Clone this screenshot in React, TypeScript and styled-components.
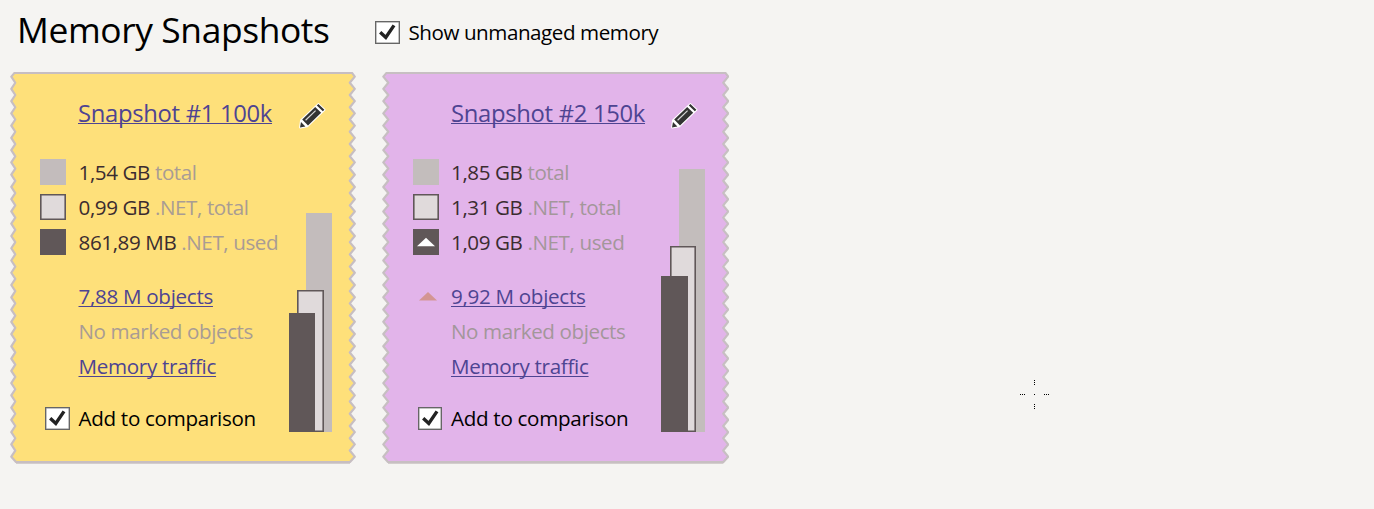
import React from "react";
import styled, { createGlobalStyle } from "styled-components";

const GlobalStyle = createGlobalStyle`
  body {
    margin: 0;
    background: #f5f4f2;
    font-family: "Open Sans", "Noto Sans", sans-serif;
    color: #000;
  }
`;

const Page = styled.main`
  position: relative;
  box-sizing: border-box;
  height: 509px;
  overflow: hidden;
`;

const Header = styled.header`
  display: flex;
  align-items: flex-start;
  height: 72px;
  padding-left: 17px;
  box-sizing: border-box;
`;

const Heading = styled.h1`
  width: 358px;
  margin: 4px 0 0;
  font-size: 35.4px;
  font-weight: 400;
  letter-spacing: -0.4px;
  line-height: 50px;
  white-space: nowrap;
`;

const CheckRow = styled.label<{ $gap: number; $tracking?: number }>`
  display: flex;
  align-items: flex-start;
  gap: ${(p) => p.$gap}px;
  font-size: 20.6px;
  letter-spacing: ${(p) => p.$tracking ?? -0.3}px;
  line-height: 35px;
  white-space: nowrap;
`;

const HeaderCheck = styled.div`
  margin-top: 15px;
`;

const CheckBox = styled.span<{ $width: number }>`
  box-sizing: border-box;
  flex: none;
  width: ${(p) => p.$width}px;
  height: 23px;
  margin-top: 6px;
  border: 1px solid #666;
  box-shadow: inset 0 0 0 0.5px #8a8a8a;
  background: #fff;
  svg {
    display: block;
  }
`;

const Cards = styled.section`
  display: flex;
  gap: 26px;
  padding-left: 10px;
`;

const Card = styled.article<{ $width: number; $inset: number }>`
  position: relative;
  display: flex;
  box-sizing: border-box;
  width: ${(p) => p.$width}px;
  height: 392px;
  padding: 26px 0 0 ${(p) => p.$inset}px;
`;

const Paper = styled.svg`
  position: absolute;
  inset: 0;
`;

const Info = styled.div<{ $width: number }>`
  position: relative;
  flex: none;
  width: ${(p) => p.$width}px;
`;

const TitleRow = styled.div`
  display: flex;
  height: 57px;
  padding-left: 38px;
  white-space: nowrap;
`;

const Link = styled.a<{ $title?: boolean }>`
  color: #4e4492;
  font-size: ${(p) => (p.$title ? "23.8px" : "20.6px")};
  letter-spacing: -0.3px;
  line-height: ${(p) => (p.$title ? "30px" : "inherit")};
  text-decoration: underline;
  text-decoration-thickness: 1.4px;
  text-underline-offset: ${(p) => (p.$title ? "1px" : "2px")};
  text-decoration-skip-ink: none;
  font-variant-ligatures: none;
`;

const Row = styled.div<{ $textColumn: number }>`
  display: grid;
  grid-template-columns: ${(p) => p.$textColumn}px auto;
  align-items: start;
  height: 35px;
  font-size: 20.6px;
  letter-spacing: -0.4px;
  line-height: 35px;
  white-space: nowrap;
  color: #3b2c30;
`;

const Group = styled.div`
  margin-bottom: 19px;
`;

const Muted = styled.span<{ $color: string }>`
  color: ${(p) => p.$color};
`;

const swatchFill = { net: "#e0dadb", used: "#605758" };

const Swatch = styled.span<{ $fill: string; $outlined?: boolean }>`
  box-sizing: border-box;
  display: block;
  width: 26px;
  height: 26px;
  margin-top: 4px;
  background: ${(p) => p.$fill};
  border: ${(p) => (p.$outlined ? "1px solid #605758" : "none")};
  box-shadow: ${(p) => (p.$outlined ? "inset 0 0 0 0.6px #605758" : "none")};
`;

const Trend = styled.span`
  display: block;
  padding: 13px 0 0 6px;
  svg {
    display: block;
  }
`;

const CompareRow = styled.div`
  margin-top: -2px;
  padding-left: 5px;
`;

const Side = styled.div`
  position: relative;
  display: flex;
  flex-direction: column;
  justify-content: space-between;
  height: 334px;
`;

const EditButton = styled.button`
  align-self: flex-start;
  width: 28px;
  height: 28px;
  margin: 4px 0 0 10px;
  padding: 0;
  border: 0;
  background: none;
  svg {
    display: block;
  }
`;

const Bars = styled.div`
  display: flex;
  flex-direction: row-reverse;
  justify-content: flex-end;
  align-items: flex-end;
`;

const Bar = styled.div<{ $fill: string; $outlined?: boolean; $overlap?: number; $width?: number }>`
  position: relative;
  box-sizing: border-box;
  flex: none;
  width: ${(p) => p.$width ?? 26}px;
  margin-right: -${(p) => p.$overlap ?? 0}px;
  background: ${(p) => p.$fill};
  border: ${(p) => (p.$outlined ? "1px solid #605758" : "none")};
  box-shadow: ${(p) => (p.$outlined ? "inset 0 0 0 0.6px #605758" : "none")};
`;

const Crosshair = styled.svg`
  position: absolute;
  left: 1020px;
  top: 380px;
`;

function Check({ width = 25 }: { width?: number }) {
  return (
    <CheckBox $width={width}>
      <svg width="22" height="21" viewBox="0 0 22 21">
        <path d="M4.2 10.2 L9.8 15.4 L18 3.4" fill="none" stroke="#222" strokeWidth="3.4" />
      </svg>
    </CheckBox>
  );
}

function Triangle({ color }: { color: string }) {
  return (
    <svg width="18" height="9" viewBox="0 0 18 9">
      <path d="M0 8.6 L9 0 L18 8.6 Z" fill={color} />
    </svg>
  );
}

function Pencil() {
  return (
    <svg width="28" height="28" viewBox="0 0 28 28">
      <path d="M1.2 25.4 L2.2 18.2 L19.4 2.2 L25.4 7.8 L8.2 24.2 Z" fill="#fff" stroke="#fff" strokeWidth="2.2" strokeLinejoin="round" />
      <path
        d="M1 25.6 L2 20 L6.4 24.4 Z M3.2 17.5 L16.2 5 L22.2 10.7 L9 23.4 Z M17.8 3.6 L19.4 2.1 L25.4 7.8 L23.8 9.3 Z"
        fill="#333"
      />
      <path d="M6.6 18.2 L16.6 8.6" stroke="#d8d8d8" strokeWidth="1.2" />
    </svg>
  );
}

const TEETH = 31;
const PITCH = 12.26;

function tornEdge(width: number, depthLeft: number) {
  const right = width - 1.2;
  const left = 1.3;
  const down: string[] = [];
  const up: string[] = [];
  for (let i = 0; i <= TEETH; i++) {
    const y = 4.6 + i * PITCH;
    down.push(`L${right} ${y}`);
    up.unshift(`L${left} ${y}`);
    if (i < TEETH) {
      down.push(`L${right - 5} ${y + PITCH / 2}`);
      up.unshift(`L${left + depthLeft} ${y + PITCH / 2}`);
    }
  }
  return `M4.5 0.9 L${width - 4} 0.9 ${down.join(" ")} L${width - 6} 390 L6 390 ${up.join(" ")} Z`;
}

type Snapshot = {
  name: string;
  width: number;
  inset: number;
  infoWidth: number;
  textColumn: number;
  depth: number;
  paper: string;
  line: string;
  gray: string;
  muted: string;
  values: [string, string, string];
  objects: string;
  heights: [number, number, number];
  usedWidth: number;
  netWidth: number;
  checkWidth: number;
  grew: boolean;
};

const snapshots: Snapshot[] = [
  {
    name: "Snapshot #1 100k", width: 346, inset: 30, infoWidth: 249, textColumn: 38.5, depth: 4,
    paper: "#fee07a", line: "#c7bec2", gray: "#c3bcbc", muted: "#a99c94",
    values: ["1,54 GB", "0,99 GB", "861,89 MB"], objects: "7,88 M objects",
    heights: [219, 142, 119], usedWidth: 26, netWidth: 27, checkWidth: 25, grew: false,
  },
  {
    name: "Snapshot #2 150k", width: 347.4, inset: 31, infoWidth: 248, textColumn: 38, depth: 5,
    paper: "#e2b4ea", line: "#c7bfc2", gray: "#c3bdbc", muted: "#a3979a",
    values: ["1,85 GB", "1,31 GB", "1,09 GB"], objects: "9,92 M objects",
    heights: [263, 186, 156], usedWidth: 27, netWidth: 26, checkWidth: 24, grew: true,
  },
];

function SnapshotCard({ s }: { s: Snapshot }) {
  return (
    <Card $width={s.width} $inset={s.inset}>
      <Paper width={s.width} height="392">
        <path d={`M6 391.2 H${s.width - 6}`} stroke="#d3cdcd" strokeWidth="1.4" />
        <path d={tornEdge(s.width, s.depth)} fill={s.paper} stroke={s.line} strokeWidth="2.2" strokeLinejoin="round" />
      </Paper>
      <Info $width={s.infoWidth}>
        <TitleRow>
          <Link $title>{s.name}</Link>
        </TitleRow>
        <Group>
          <Row $textColumn={s.textColumn}>
            <Swatch $fill={s.gray} />
            <span>{s.values[0]} <Muted $color={s.muted}>total</Muted></span>
          </Row>
          <Row $textColumn={s.textColumn}>
            <Swatch $fill={swatchFill.net} $outlined />
            <span>{s.values[1]} <Muted $color={s.muted}>.NET, total</Muted></span>
          </Row>
          <Row $textColumn={s.textColumn}>
            <Swatch $fill={swatchFill.used}>
              {s.grew && (
                <svg width="26" height="26" viewBox="0 0 26 26" display="block">
                  <path d="M4 17.3 L13 8.7 L22 17.3 Z" fill="#fff" />
                </svg>
              )}
            </Swatch>
            <span>{s.values[2]} <Muted $color={s.muted}>.NET, used</Muted></span>
          </Row>
        </Group>
        <Group>
          <Row $textColumn={s.textColumn}>
            <Trend>{s.grew && <Triangle color="#d39593" />}</Trend>
            <Link>{s.objects}</Link>
          </Row>
          <Row $textColumn={s.textColumn}>
            <span />
            <Muted $color={s.muted}>No marked objects</Muted>
          </Row>
          <Row $textColumn={s.textColumn}>
            <span />
            <Link>Memory traffic</Link>
          </Row>
        </Group>
        <CompareRow>
          <CheckRow $gap={s.textColumn - 5 - s.checkWidth}>
            <Check width={s.checkWidth} />
            Add to comparison
          </CheckRow>
        </CompareRow>
      </Info>
      <Side>
        <EditButton aria-label="Rename snapshot">
          <Pencil />
        </EditButton>
        <Bars>
          <Bar $fill={s.gray} style={{ height: s.heights[0] }} />
          <Bar
            $fill={swatchFill.net}
            $outlined
            $width={s.netWidth}
            $overlap={s.netWidth - 9}
            style={{ height: s.heights[1] }}
          />
          <Bar
            $fill={swatchFill.used}
            $width={s.usedWidth}
            $overlap={18}
            style={{ height: s.heights[2] }}
          />
        </Bars>
      </Side>
    </Card>
  );
}

const crossDots = [
  [0, 14], [2, 14], [4, 14], [14, 14], [24, 14], [26, 14], [28, 14],
  [14, 0], [14, 2], [14, 4], [14, 24], [14, 26], [14, 28],
];

export default function App() {
  return (
    <Page>
      <GlobalStyle />
      <Header>
        <Heading>Memory Snapshots</Heading>
        <HeaderCheck>
          <CheckRow $gap={8.5} $tracking={-0.44}>
            <Check />
            Show unmanaged memory
          </CheckRow>
        </HeaderCheck>
      </Header>
      <Cards>
        {snapshots.map((s) => (
          <SnapshotCard key={s.name} s={s} />
        ))}
      </Cards>
      <Crosshair width="29" height="29">
        {crossDots.map(([x, y]) => (
          <rect key={`${x}-${y}`} x={x} y={y} width="1" height="1" fill="#000" />
        ))}
      </Crosshair>
    </Page>
  );
}
